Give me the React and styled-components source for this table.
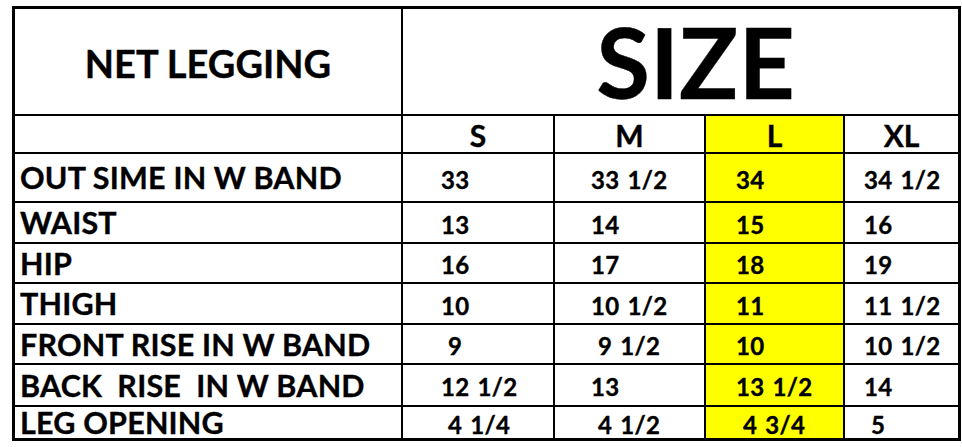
import styled, { createGlobalStyle } from "styled-components";

const SIZES = ["S", "M", "L", "XL"];
const HIGHLIGHT = "L";

// left padding of the values, per size column (Excel-like left alignment)
const VALUE_OFFSET = { S: 38, M: 36, L: 30, XL: 19 };

const ROWS = [
  { label: "OUT SIME IN W BAND", values: ["33", "33 1/2", "34", "34 1/2"] },
  { label: "WAIST", values: ["13", "14", "15", "16"] },
  { label: "HIP", values: ["16", "17", "18", "19"] },
  { label: "THIGH", values: ["10", "10 1/2", "11", "11 1/2"] },
  {
    label: "FRONT RISE IN W BAND",
    values: ["9", "9 1/2", "10", "10 1/2"],
    indent: [true, true, false, false],
  },
  { label: "BACK  RISE  IN W BAND", values: ["12 1/2", "13", "13 1/2", "14"] },
  {
    label: "LEG OPENING",
    values: ["4 1/4", "4 1/2", "4 3/4", "5"],
    indent: [true, true, true, true],
  },
];

const GlobalStyle = createGlobalStyle`
  html, body {
    margin: 0;
    padding: 0;
    background: #ffffff;
  }
  body {
    font-family: Lato, "Open Sans", sans-serif;
    font-weight: 700;
    color: #000000;
    -webkit-text-stroke: 0.35px #000000;
  }
`;

export default function App() {
  return (
    <>
      <GlobalStyle />
      <Page>
        <Sheet>
          <TitleCell>NET LEGGING</TitleCell>
          <SizeTitle>SIZE</SizeTitle>

          <Cell />
          {SIZES.map((size) => (
            <SizeHead key={size} $highlight={size === HIGHLIGHT}>
              {size}
            </SizeHead>
          ))}

          {ROWS.map((row) => (
            <Row key={row.label} row={row} />
          ))}
        </Sheet>
      </Page>
    </>
  );
}

function Row({ row }) {
  return (
    <>
      <LabelCell>{row.label}</LabelCell>
      {row.values.map((value, i) => {
        const size = SIZES[i];
        const indent = row.indent && row.indent[i] ? 7 : 0;
        return (
          <ValueCell
            key={size}
            $highlight={size === HIGHLIGHT}
            $offset={VALUE_OFFSET[size] + indent}
          >
            {value}
          </ValueCell>
        );
      })}
    </>
  );
}

const Page = styled.div`
  padding: 6px 0 0 12px;
`;

const Sheet = styled.div`
  display: grid;
  grid-template-columns: 386px 150px 149px 137px 113px;
  grid-template-rows: 105px 36px 47px 39px 38px 39px 38px 40px 31px;
  gap: 2px;
  width: fit-content;
  background: #000000;
  border: 3px solid #000000;
`;

const Cell = styled.div`
  display: flex;
  align-items: center;
  min-width: 0;
  background: ${(p) => (p.$highlight ? "#ffff00" : "#ffffff")};
  line-height: 1;
  white-space: pre;
`;

const TitleCell = styled(Cell)`
  justify-content: center;
  font-size: 38px;
  padding-top: 2px;
`;

const SizeTitle = styled(Cell)`
  grid-column: 2 / span 4;
  justify-content: center;
  padding: 0 0 2px 30px;
  font-size: 98px;
`;

const SizeHead = styled(Cell)`
  justify-content: center;
  font-size: 30px;
  padding-top: 2px;
`;

const LabelCell = styled(Cell)`
  padding-left: 5px;
  font-size: 30.5px;
  letter-spacing: 0.2px;
`;

const ValueCell = styled(Cell)`
  padding-left: ${(p) => p.$offset}px;
  padding-top: 4px;
  font-size: 24px;
  word-spacing: 2px;
  letter-spacing: 0.3px;
`;
